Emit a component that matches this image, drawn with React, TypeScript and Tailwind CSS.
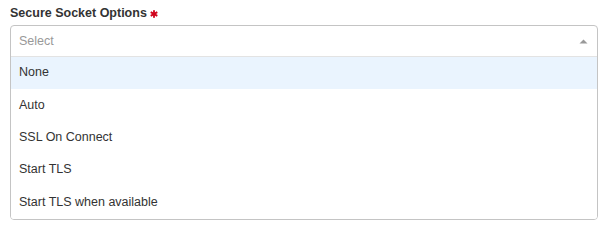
const options = ["None", "Auto", "SSL On Connect", "Start TLS", "Start TLS when available"];

const RequiredMark = () => (
  <svg width="8" height="8" viewBox="0 0 8 8" className="ml-[3px] mt-[1px]">
    <g fill="#d0021b" transform="translate(4 4)">
      <rect x="-0.9" y="-3.8" width="1.8" height="7.6" />
      <rect x="-0.9" y="-3.8" width="1.8" height="7.6" transform="rotate(60)" />
      <rect x="-0.9" y="-3.8" width="1.8" height="7.6" transform="rotate(-60)" />
    </g>
  </svg>
);

export default function App() {
  return (
    <div className="w-[608px] h-[227px] bg-white px-[10px] pt-[4px] font-['Liberation_Sans',Arial,sans-serif] text-[12.5px] text-[#333]">
      <div className="flex items-center h-[18px] font-bold">
        <span>Secure Socket Options</span>
        <RequiredMark />
      </div>
      <div className="mt-[3px] w-[588px] border border-[#c4c4c4] rounded-[4px] overflow-hidden">
        <div className="h-[31px] flex items-center justify-between pl-[8px] pr-[9px] border-b border-[#e3e3e3]">
          <span className="text-[#999]">Select</span>
          <svg width="9" height="5" viewBox="0 0 9 5">
            <path d="M0.5 4.5 L4.5 0.5 L8.5 4.5 Z" fill="#999" />
          </svg>
        </div>
        {options.map((o, i) => (
          <div
            key={o}
            className={`h-[32.4px] flex items-center pl-[8px] pb-[1px] ${i === 0 ? "bg-[#eaf4fe]" : "bg-white"}`}
          >
            {o}
          </div>
        ))}
      </div>
    </div>
  );
}
